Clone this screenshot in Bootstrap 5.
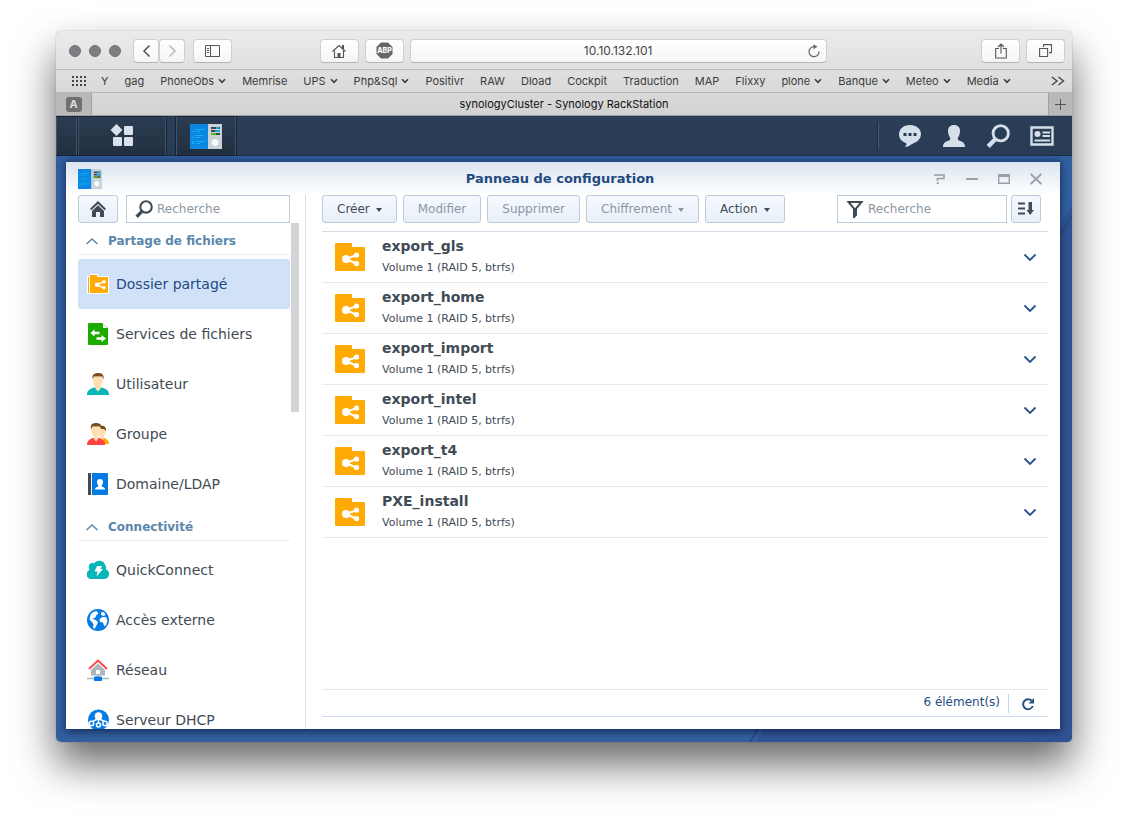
<!DOCTYPE html>
<html lang="fr">
<head>
<meta charset="utf-8">
<meta name="viewport" content="width=device-width, initial-scale=1">
<title>synologyCluster - Synology RackStation</title>
<link href="https://cdn.jsdelivr.net/npm/bootstrap@5.3.0/dist/css/bootstrap.min.css" rel="stylesheet">
<script src="https://cdn.jsdelivr.net/npm/bootstrap@5.3.0/dist/js/bootstrap.bundle.min.js"></script>
<style>
  :root { --dsm-text: #414b55; --dsm-blue: #1f4a82; --dsm-line: #e6e9f0; }
  body { height: 100vh; padding: 31px 56px 80px; background: #fff; color: var(--dsm-text); font-family: "DejaVu Sans", Verdana, sans-serif; font-size: 12px; line-height: 16px; }
  svg { display: block; flex: none; }
  a { color: inherit; text-decoration: none; }
  .fill-rest { flex: 1 1 0; min-height: 0; }

  /* Browser window */
  .browser { border-radius: 5px; overflow: hidden; }
  .browser-shadow { border-radius: 5px; box-shadow: 0 22px 42px rgba(0,0,0,.6), 0 0 1px rgba(0,0,0,.6); }
  .browser-chrome { font-family: Inter, "Liberation Sans", sans-serif; font-size: 11px; color: #3c3c3c; background: linear-gradient(#ebebeb, #d2d2d2); }
  .chrome-bar { height: 39px; padding: 1px 7px 0 13px; border-bottom: 1px solid #bdbdbd; }
  .chrome-left { flex: 10 1 0; }
  .chrome-right { flex: 7 1 0; }
  .dot { width: 12px; height: 12px; border-radius: 50%; background: #7e7d82; border: 1px solid #6f6e73; }
  .chrome-btn { width: 39px; height: 24px; padding: 0; border: 1px solid #cfcfcf; border-bottom-color: #b4b4b4; border-radius: 4px; background: linear-gradient(#fff, #f5f5f5); color: #555; display: flex; align-items: center; justify-content: center; }
  .chrome-btn.half { width: 26px; }
  .quick-btns { gap: 6px; margin-right: 6px; }
  .address { width: 417px; height: 24px; border: 1px solid #cfcfcf; border-bottom-color: #b4b4b4; border-radius: 4px; background: linear-gradient(#fff, #f5f5f5); }
  .address input { min-width: 0; border: 0; background: none; text-align: center; font-size: 12px; color: #444; padding: 0 0 0 24px; outline: 0; }
  .address button { border: 0; background: none; padding: 0; width: 24px; color: #666; }
  .bookmarks { height: 23px; padding: 0 7px 0 16px; border-bottom: 1px solid #b5b5b5; }
  .bookmarks ul { padding-left: 15px; gap: 16px; }
  .tabs-row { height: 23px; border-bottom: 1px solid #9f9f9f; color: #111; }
  .tab-title { padding-right: 12px; }
  .pinned { width: 36px; background: #b9b9b9; border-right: 1px solid #a0a0a0; }
  .pinned span { width: 16px; height: 15px; border-radius: 3px; background: #707070; color: #ddd; font-weight: 700; line-height: 15px; text-align: center; }
  .new-tab { width: 24px; border: 0; border-left: 1px solid #a0a0a0; background: #b9b9b9; color: #555; padding: 0; }

  /* DSM taskbar */
  .taskbar { height: 40px; background: linear-gradient(#2a3e57, #293c55); border-top: 1px solid #1d3a52; border-bottom: 1px solid #1f2f44; color: #d5dfea; }
  .task-slot { height: 38px; border: 1px solid #43546a; border-width: 0 1px; background: linear-gradient(#2b3d52, #222f3f); color: #d8e1ec; padding: 0; box-shadow: 0 0 0 1px #162338; }
  .slot-edge { width: 21px; }
  .slot-menu { width: 88px; margin-left: 1px; }
  .slot-app { width: 60px; margin-left: 10px; }
  .tray { border-left: 1px solid #4a5d78; box-shadow: -1px 0 #1a2a40; margin: 6px 0; padding: 0 18px 0 19px; gap: 20px; }
  .tray button { border: 0; background: none; padding: 0; color: inherit; }

  .desktop { padding: 4px 12px 13px 10px; background: #315f9f url("data:image/svg+xml,%3Csvg xmlns='http://www.w3.org/2000/svg' viewBox='0 0 1016 586' preserveAspectRatio='none'%3E%3Cpath d='M700 586L1016 50V586z' fill='%23305395'/%3E%3Cpath d='M694 586L1016 60' stroke='%23284c83' stroke-width='2'/%3E%3C/svg%3E") 0 0 / 100% 100% no-repeat; }
  .dsm-window { background: #fff; border-top: 2px solid #264d83; box-shadow: 0 2px 8px rgba(0,10,40,.65); }
  .dsm-title { height: 33px; background: linear-gradient(#dbe4ee, #fff); }
  .dsm-title h1 { font-size: 13px; line-height: 33px; font-weight: 700; color: var(--dsm-blue); margin: 0; }
  .win-btns { gap: 20px; padding-right: 18px; color: #9a9fa8; }
  .win-btns button { border: 0; background: none; padding: 0; color: inherit; }
  .side-block { flex: 1 1 0; }

  .dsm-btn { --bs-btn-color: #414b55; --bs-btn-border-color: #bccbd9; --bs-btn-border-radius: 3px; --bs-btn-font-size: 12px; --bs-btn-line-height: 16px; --bs-btn-padding-x: 14px; --bs-btn-padding-y: 5px; --bs-btn-disabled-color: #8b97a3; --bs-btn-disabled-border-color: #bccbd9; --bs-btn-disabled-opacity: 1; background: linear-gradient(#f5f9ff, #e9f0f8) !important; height: 28px; }
  .dsm-btn.dropdown-toggle::after { border-width: 4px 3px 0; vertical-align: 1px; margin-left: 6px; }
  .icon-btn { padding: 0; display: flex; align-items: center; justify-content: center; flex: none; width: 30px; }
  .icon-btn.wide { width: 40px; }
  .search-box { height: 28px; border: 1px solid #bccbd9; background: #fff; padding-left: 8px; gap: 4px; }
  .search-box input { border: 0; outline: 0; padding: 0; font-size: 12px; min-width: 0; color: var(--dsm-text); }
  .search-box input::placeholder { color: #8b97a3; opacity: 1; }
  .filter-box { width: 170px; }

  .sidebar { width: 240px; padding-left: 12px; border-right: 1px solid #dcdcdc; }
  .side-tools { padding-right: 15px; gap: 8px; }
  .side-list { width: 212px; overflow: hidden; }
  .thumb { width: 8px; height: 189px; background: #d3d4d6; margin-left: 1px; }
  .group-head { height: 32px; margin: 0 0 4px; padding: 4px 0 0 7px; gap: 9px; font-size: 12px; line-height: 16px; font-weight: 700; color: #5a86ab; border-bottom: 1px solid #ebedef; }
  .side-item { height: 50px; padding-left: 9px; gap: 7px; font-size: 14px; border-radius: 3px; color: var(--dsm-text); }
  .side-item.active { background: #d1e2f8; color: var(--dsm-blue); }

  .main-pane { padding: 0 12px 12px 16px; }
  .tool-row { gap: 6px; border-bottom: 1px solid #d0dbe5; height: 37px; }
  .tool-end { gap: 4px; padding-right: 7px; }
  .share { height: 51px; border-bottom: 1px solid var(--dsm-line); padding: 0 11px 0 12px; }
  .share-name { font-size: 14px; line-height: 20px; font-weight: 700; margin: 0; }
  .share-info { font-size: 11px; line-height: 16px; padding-top: 4px; margin-bottom: 2px; }
  .share button { border: 0; background: none; padding: 0; color: #29528c; }
  .status { height: 28px; border-top: 1px solid #e6e9ec; border-bottom: 1px solid #cddcec; color: var(--dsm-blue); padding: 4px 13px 3px 0; }
  .status button { border: 0; border-left: 1px solid #c3d6e8; background: none; padding: 0 0 0 12px; color: #29527f; }
</style>
</head>
<body class="d-flex flex-column">

<svg width="0" height="0" class="position-absolute" aria-hidden="true">
  <symbol id="chev" viewBox="0 0 8 6"><path d="M1 1.3 4 4.3 7 1.3" fill="none" stroke="currentColor" stroke-width="1.6"/></symbol>
  <symbol id="chev-big" viewBox="0 0 14 9"><path d="M1.5 1.5 7 7 12.500 1.5" fill="none" stroke="currentColor" stroke-width="1.8"/></symbol>
  <symbol id="panel" viewBox="0 0 32 25" preserveAspectRatio="none">
    <path fill="#0b86e3" d="M0 0h18v25H0z"/><path fill="#c9d1d9" d="M18 0h14v25H18z"/>
    <path d="m1.500 6.500 1.500 1.500 2-3M1.500 12.500 3 14l2-3M6 5.500h9M6 7.500h4M6 11.500h7M6 13.500h4M6 17.500h9M6 19.500h4M2 17.500h2v2H2z" fill="none" stroke="#0fb2f5"/>
    <path stroke="#3b4650" stroke-width="2" d="M21 4h9M21 7h9M21 10h9"/><path stroke="#16b0f0" stroke-width="2" d="M26 4h3M25 7h5"/><path stroke="#56bb00" stroke-width="2" d="M21 10h5"/>
    <circle cx="25" cy="18.500" r="4" fill="#f3fbfd" stroke="#aeb6be" stroke-width=".5"/>
  </symbol>
  <symbol id="folder" viewBox="0 0 30 28">
    <path fill="#ffaa05" d="M1 0h15q1 0 1 1v3h12q1 0 1 1v22q0 1-1 1H1q-1 0-1-1V1q0-1 1-1z"/>
    <path d="M22 12 11 16l11 5" fill="none" stroke="#fff" stroke-width="2"/><circle cx="11" cy="16" r="4" fill="#fff"/><circle cx="21.500" cy="12" r="2.600" fill="#fff"/><circle cx="21.500" cy="20.500" r="2.600" fill="#fff"/>
  </symbol>
  <symbol id="magnifier" viewBox="0 0 22 22"><circle cx="13.500" cy="8.500" r="7" fill="none" stroke="currentColor" stroke-width="2.600"/><path d="m8.500 14-6.500 6.500" stroke="currentColor" stroke-width="4"/></symbol>
  <symbol id="house" viewBox="0 0 16 16"><path d="M.7 8.500 8 1.500l7.300 7" fill="none" stroke="currentColor" stroke-width="2"/><path fill="currentColor" d="M2 10 8 4.300 14 10v6h-4v-5H6v5H2z"/></symbol>
</svg>

<div class="browser-shadow fill-rest d-flex">
<div class="browser w-100 d-flex flex-column">

  <header class="browser-chrome flex-shrink-0">
    <div class="chrome-bar d-flex align-items-center">
      <div class="chrome-left d-flex align-items-center">
        <div class="d-flex gap-2"><span class="dot"></span><span class="dot"></span><span class="dot"></span></div>
        <div class="d-flex ps-2 ms-1">
          <button class="chrome-btn half" aria-label="Précédent"><svg width="9" height="14" viewBox="0 0 9 14"><path d="M7.500 1.500 2 7l5.500 5.500" fill="none" stroke="#555" stroke-width="1.500"/></svg></button>
          <button class="chrome-btn half" aria-label="Suivant"><svg width="9" height="14" viewBox="0 0 9 14"><path d="M1.500 1.500 7 7l-5.500 5.500" fill="none" stroke="#bbb" stroke-width="1.500"/></svg></button>
        </div>
        <button class="chrome-btn ms-2" aria-label="Barre latérale"><svg width="15" height="12" viewBox="0 0 15 12" fill="none" stroke="currentColor"><path d="M.5.500h14v11H.5zM5.500.500v11M2 3.500h2M2 5.500h2M2 7.500h2"/></svg></button>
        <div class="quick-btns d-flex ms-auto">
          <button class="chrome-btn" aria-label="Accueil"><svg width="16" height="16" viewBox="0 0 16 16"><path d="M1.500 8.500 8 2.500l6.500 6M3.500 7.500v7h9v-7M11.500 5V2.500h1V6" fill="none" stroke="currentColor" stroke-width="1.100"/><path fill="currentColor" d="M6.500 10h3v5h-3z"/></svg></button>
          <button class="chrome-btn" aria-label="Adblock Plus"><svg width="17" height="17" viewBox="0 0 17 17"><path fill="#666" d="M5 .5h7L16.500 5v7L12 16.500H5L.5 12V5z"/><text x="8.500" y="11" text-anchor="middle" font-size="7" font-weight="800" fill="#fff">ABP</text></svg></button>
        </div>
      </div>
      <form class="address d-flex align-items-center">
        <input class="flex-grow-1" type="text" value="10.10.132.101" aria-label="Adresse">
        <button type="button" aria-label="Recharger"><svg width="14" height="14" viewBox="0 0 14 14" class="mx-auto"><path d="M7 2.700A5 5 0 1 0 12 7.500" fill="none" stroke="currentColor" stroke-width="1.200"/><path d="M6.500.200v5L10.500 2.700z" fill="currentColor"/></svg></button>
      </form>
      <div class="chrome-right quick-btns d-flex justify-content-end me-0">
        <button class="chrome-btn" aria-label="Partager"><svg width="12" height="16" viewBox="0 0 12 16" fill="none" stroke="currentColor" stroke-width="1.100"><path d="M4 5.500H.7v9.500h10.600V5.500H8M6 10.500V1.500M3 4l3-3 3 3"/></svg></button>
        <button class="chrome-btn" aria-label="Onglets"><svg width="13" height="13" viewBox="0 0 13 13" fill="none" stroke="currentColor" stroke-width="1.100"><path d="M.6 4.500h8v8h-8zM4.500 3V.6h8v8H10"/></svg></button>
      </div>
    </div>

    <nav class="bookmarks d-flex align-items-center" aria-label="Favoris">
      <svg width="14" height="11" viewBox="0 0 14 11"><path d="M0 1h14M0 5h14M0 9h14" stroke="#444" stroke-width="2" stroke-dasharray="2 2"/></svg>
      <ul class="list-unstyled d-flex mb-0 flex-grow-1">
        <li><a href="#">Y</a></li><li><a href="#">gag</a></li>
        <li><a href="#" class="d-flex align-items-center gap-1">PhoneObs<svg width="8" height="6"><use href="#chev"/></svg></a></li>
        <li><a href="#">Memrise</a></li>
        <li><a href="#" class="d-flex align-items-center gap-1">UPS<svg width="8" height="6"><use href="#chev"/></svg></a></li>
        <li><a href="#" class="d-flex align-items-center gap-1">Php&amp;Sql<svg width="8" height="6"><use href="#chev"/></svg></a></li>
        <li><a href="#">Positivr</a></li><li><a href="#">RAW</a></li><li><a href="#">Dload</a></li><li><a href="#">Cockpit</a></li><li><a href="#">Traduction</a></li><li><a href="#">MAP</a></li><li><a href="#">Flixxy</a></li>
        <li><a href="#" class="d-flex align-items-center gap-1">plone<svg width="8" height="6"><use href="#chev"/></svg></a></li>
        <li><a href="#" class="d-flex align-items-center gap-1">Banque<svg width="8" height="6"><use href="#chev"/></svg></a></li>
        <li><a href="#" class="d-flex align-items-center gap-1">Meteo<svg width="8" height="6"><use href="#chev"/></svg></a></li>
        <li><a href="#" class="d-flex align-items-center gap-1">Media<svg width="8" height="6"><use href="#chev"/></svg></a></li>
      </ul>
      <svg width="14" height="10" viewBox="0 0 14 10"><path d="m1 1 5 4-5 4M7.500 1l5 4-5 4" fill="none" stroke="#444" stroke-width="1.400"/></svg>
    </nav>

    <div class="tabs-row d-flex">
      <a href="#" class="pinned d-flex align-items-center justify-content-center" aria-label="Onglet épinglé"><span>A</span></a>
      <a href="#" class="tab-title flex-grow-1 d-flex align-items-center justify-content-center">synologyCluster - Synology RackStation</a>
      <button class="new-tab" aria-label="Nouvel onglet"><svg width="11" height="11" viewBox="0 0 11 11" class="mx-auto"><path d="M5.500 0v11M0 5.500h11" stroke="currentColor"/></svg></button>
    </div>
  </header>

  <nav class="taskbar d-flex flex-shrink-0" aria-label="Barre des tâches">
    <div class="task-slot slot-edge"></div>
    <button class="task-slot slot-menu d-flex align-items-center justify-content-center" aria-label="Menu principal"><svg width="24" height="24" viewBox="0 0 24 24" fill="currentColor"><path d="M6.500 0 12.500 6 6.500 12 .5 6z"/><rect x="14" y="2" width="9" height="9" rx="1"/><rect x="3" y="13" width="9" height="9" rx="1"/><rect x="14" y="13" width="9" height="9" rx="1"/></svg></button>
    <button class="task-slot slot-app d-flex align-items-center justify-content-center" aria-label="Panneau de configuration"><svg width="32" height="25"><use href="#panel"/></svg></button>
    <div class="tray ms-auto d-flex align-items-center">
      <button aria-label="Discussion"><svg width="24" height="24" viewBox="0 0 24 24"><path fill="currentColor" d="M12 1c6.500 0 11 4 11 9 0 6-6 9-9 10-2 1-4 3-7 3 1-1 2-3 1-4C4 17.500 1 15 1 10.500 1 5 5.500 1 12 1z"/><path d="M5.500 9h3v3h-3zM10.500 9h3v3h-3zM15.500 9h3v3h-3z" fill="#293c55"/></svg></button>
      <button aria-label="Compte"><svg width="24" height="24" viewBox="0 0 24 24"><path fill="currentColor" d="M12 1c4 0 6 2.500 6 6 0 3-1 5-2 6.500-.5 1.500 0 2.500 1 3 3 1 6 2 6 6.500H1c0-4.500 3-5.500 6-6.500 1-.5 1.500-1.500 1-3C7 12 6 10 6 7c0-3.500 2-6 6-6z"/></svg></button>
      <button aria-label="Rechercher"><svg width="24" height="24"><use href="#magnifier"/></svg></button>
      <button aria-label="Widgets"><svg width="24" height="24" viewBox="0 0 24 24"><path d="M1.500 3.500h21v17h-21z" fill="none" stroke="currentColor" stroke-width="2.400"/><circle cx="7.500" cy="10" r="3" fill="currentColor"/><path d="M12.500 8.500H20M12.500 12H20M4.500 16.500H20" stroke="currentColor" stroke-width="2"/></svg></button>
    </div>
  </nav>

  <main class="desktop fill-rest d-flex">
    <section class="dsm-window w-100 d-flex flex-column">
      <div class="dsm-title d-flex flex-shrink-0">
        <div class="side-block d-flex align-items-center ps-2 ms-1"><svg width="24" height="20"><use href="#panel"/></svg></div>
        <h1>Panneau de configuration</h1>
        <div class="side-block win-btns d-flex justify-content-end align-items-center">
          <button aria-label="Aide"><svg width="12" height="12" viewBox="0 0 12 12"><path d="M0 2h10v3.500H3.500V8" fill="none" stroke="currentColor" stroke-width="1.600"/><path fill="currentColor" d="M2.700 9.200h2V11h-2z"/></svg></button>
          <button aria-label="Réduire"><svg width="12" height="12" viewBox="0 0 12 12"><path d="M0 6h12" stroke="currentColor" stroke-width="2"/></svg></button>
          <button aria-label="Agrandir"><svg width="12" height="12" viewBox="0 0 12 12"><path d="M.7 2h10.600v8.300H.7z" fill="none" stroke="currentColor" stroke-width="1.400"/><path d="M0 2.500h12" stroke="currentColor" stroke-width="3"/></svg></button>
          <button aria-label="Fermer"><svg width="12" height="12" viewBox="0 0 12 12"><path d="m.7 1 10.600 10M11.300 1 .7 11" stroke="currentColor" stroke-width="1.800"/></svg></button>
        </div>
      </div>

      <div class="d-flex fill-rest">
        <aside class="sidebar d-flex flex-column flex-shrink-0">
          <div class="side-tools d-flex flex-shrink-0">
            <button class="btn dsm-btn icon-btn wide" aria-label="Accueil"><svg width="16" height="16"><use href="#house"/></svg></button>
            <label class="search-box d-flex align-items-center flex-grow-1"><svg width="18" height="18"><use href="#magnifier"/></svg><input type="search" class="w-100" placeholder="Recherche" aria-label="Rechercher un réglage"></label>
          </div>
          <div class="d-flex fill-rest">
            <nav class="side-list">
              <h2 class="group-head d-flex align-items-center"><svg width="14" height="8" viewBox="0 0 14 8"><path d="m1.500 7 5.500-5 5.500 5" fill="none" stroke="#6087a8" stroke-width="1.500"/></svg>Partage de fichiers</h2>
              <a href="#" class="side-item active d-flex align-items-center"><svg width="22" height="22" viewBox="0 0 22 22"><path d="M0 3h3V1h8v2h11v18H0z" fill="#fff"/><path d="M1 4h1v16H1zM3 2h7v2h11v16H3z" fill="#ffaa05"/><path d="m17 8.500-7 3.200 7 3.300" fill="none" stroke="#fff" stroke-width="1.400"/><circle cx="10" cy="11.700" r="2.300" fill="#fff"/><circle cx="17" cy="8.800" r="1.700" fill="#fff"/><circle cx="17" cy="14.700" r="1.700" fill="#fff"/></svg>Dossier partagé</a>
              <a href="#" class="side-item d-flex align-items-center"><svg width="22" height="22" viewBox="0 0 22 22"><path d="M2 0h13l6 5v16q0 1-1 1H2q-1 0-1-1V1q0-1 1-1z" fill="#1eab00"/><path d="M16 1v4h4.500" fill="#fff"/><path d="M7.500 6.500v2.300h5v2.400h-5v2.300L3.500 10zM14.500 12v2.300h-5v2.400h5V19l4.500-3.500z" fill="#fff"/></svg>Services de fichiers</a>
              <a href="#" class="side-item d-flex align-items-center"><svg width="22" height="22" viewBox="0 0 22 22"><path d="M0 22c0-5 3-6 7.500-7.500h7C19 16 22 17 22 22z" fill="#06b6b9"/><path d="M7 4h8.500c1 0 1.500 3 0 4-.5 3-1 4-2 5.500V16L11 18.500 8.500 16v-2.500C7 12 6.500 11 6.300 8 5 7 6 4 7 4z" fill="#ffdfb0"/><path d="M5.500 6C5 2 7 0 11.500 0S17 3 16.500 6l-1.500-2.500H7z" fill="#7a4a22"/></svg>Utilisateur</a>
              <a href="#" class="side-item d-flex align-items-center"><svg width="22" height="22" viewBox="0 0 22 22"><path d="M15 14c4 1.500 7 2.500 7 7h-7z" fill="#ffaa05"/><path d="M12 5h6c1 1 1 3 .5 5s-1 3-2 3.500V17l-4-3z" fill="#ffdfb0"/><path d="M13 3c4-1 6.500 1 6 5l-2-2h-4z" fill="#7a4a22"/><path d="M0 22c0-4.500 2-5.500 6-7h6c4 1.500 6 2.500 6 7z" fill="#ff4444"/><path d="M5 4h8c1 0 1.500 3 0 4-.3 3-1 4-2 5.500V16l-2 2.500L7 16v-2.500C5.500 12 5 11 4.500 8 3.500 7 4 4 5 4z" fill="#ffdfb0"/><path d="M4 6C3 2 5 0 9.300 0 14 0 15 3 14.500 6L13 3.500H5.500z" fill="#7a4a22"/></svg>Groupe</a>
              <a href="#" class="side-item d-flex align-items-center"><svg width="22" height="22" viewBox="0 0 22 22"><path fill="#414b55" d="M1 0h3v22H1z"/><path fill="#037be5" d="M5 0h15q1 0 1 1v20q0 1-1 1H5z"/><path fill="#fff" d="M13 6c2 0 3 1 3 3 0 1.500-.6 2.500-1.300 3.300v1.200c1.800.5 3.300 1 3.300 3H8c0-2 1.500-2.500 3.300-3v-1.200C10.600 11.500 10 10.500 10 9c0-2 1-3 3-3z"/></svg>Domaine/LDAP</a>
              <h2 class="group-head d-flex align-items-center"><svg width="14" height="8" viewBox="0 0 14 8"><path d="m1.500 7 5.500-5 5.500 5" fill="none" stroke="#6087a8" stroke-width="1.500"/></svg>Connectivité</h2>
              <a href="#" class="side-item d-flex align-items-center"><svg width="22" height="22" viewBox="0 0 22 22"><path fill="#06b6b9" d="M5 20c-7 0-6.500-7.500-2.500-9C0 6 4 3 7 4.500 9 1 17 .5 18 6c2 2 .5 3 1 4.500 5 1.500 3.500 9.500-2 9.500z"/><path fill="#fff" d="M10 7h5l-1.500 3H16l-6.500 7.500 1-5H7.500z"/></svg>QuickConnect</a>
              <a href="#" class="side-item d-flex align-items-center"><svg width="22" height="22" viewBox="0 0 22 22"><circle cx="11" cy="11" r="11" fill="#037be5"/><path fill="#fff" d="M3.500 5.500C5 3.500 7 2.300 9.500 2l2 2.500-2 1.500-1 2.500L5.500 9.500l3 1.500 2.500 2-1.500 3.500-2 3.500L6 18.500l.5-3.500L2.500 10.500zM14 3.500l3-.5 1.500 3-2 1-2.500-1zM12.500 10l3-2 3.500 0 1.500 3.500-1.500 5L17 17l-1-3.500-3-.5z"/></svg>Accès externe</a>
              <a href="#" class="side-item d-flex align-items-center"><svg width="22" height="22" viewBox="0 0 22 22"><path fill="#adb6c0" d="m11 4.500 7 6.500v5.500H4V11z"/><path d="m2 10 9-8.500L20 10" fill="none" stroke="#ff4444" stroke-width="1.800"/><path fill="#fff" d="M9 11h4v4H9z"/><path d="M11 16v3M0 19.500h22" stroke="#adb6c0" stroke-width="1.600"/><rect x="7" y="17.500" width="8" height="4.500" rx="1" fill="#037be5"/></svg>Réseau</a>
              <a href="#" class="side-item d-flex align-items-center"><svg width="22" height="22" viewBox="0 0 22 22"><circle cx="11.500" cy="11" r="10.500" fill="#037be5"/><circle cx="11.500" cy="7" r="3.800" fill="#fff"/><g fill="none" stroke="#fff" stroke-width="1.500"><path d="M10.500 10 5.500 12.500M11.500 10v4M12.500 10l5 2.500"/><circle cx="4.500" cy="14.500" r="2.200"/><circle cx="11.500" cy="16" r="2"/><circle cx="18" cy="14.500" r="2.200"/></g></svg>Serveur DHCP</a>
            </nav>
            <div class="thumb"></div>
          </div>
        </aside>

        <div class="main-pane flex-grow-1 d-flex flex-column">
          <div class="tool-row d-flex align-items-start flex-shrink-0">
            <button class="btn dsm-btn dropdown-toggle">Créer</button>
            <button class="btn dsm-btn" disabled>Modifier</button>
            <button class="btn dsm-btn" disabled>Supprimer</button>
            <button class="btn dsm-btn dropdown-toggle" disabled>Chiffrement</button>
            <button class="btn dsm-btn dropdown-toggle">Action</button>
            <div class="tool-end d-flex ms-auto">
              <label class="search-box filter-box d-flex align-items-center"><svg width="18" height="18" viewBox="0 0 18 18"><path d="M2.500 2h13L10 8.500v6.500L8 17V8.500z" fill="none" stroke="#414b55" stroke-width="2"/></svg><input type="search" class="w-100" placeholder="Recherche" aria-label="Filtrer les dossiers"></label>
              <button class="btn dsm-btn icon-btn" aria-label="Trier"><svg width="16" height="14" viewBox="0 0 16 14"><path d="M0 1.500h7M0 6.500h7M0 11.500h7" stroke="#414b55" stroke-width="2"/><path fill="#414b55" d="M10.500 0h3.500v8h2l-3.800 5L8.500 8h2z"/></svg></button>
            </div>
          </div>

          <ul class="list-unstyled mb-0 flex-grow-1">
            <li class="share d-flex align-items-center"><svg width="32" height="28"><use href="#folder"/></svg><div class="flex-grow-1 ps-3"><h3 class="share-name">export_gls</h3><div class="share-info">Volume 1 (RAID 5, btrfs)</div></div><button aria-label="Détails"><svg width="14" height="9"><use href="#chev-big"/></svg></button></li>
            <li class="share d-flex align-items-center"><svg width="32" height="28"><use href="#folder"/></svg><div class="flex-grow-1 ps-3"><h3 class="share-name">export_home</h3><div class="share-info">Volume 1 (RAID 5, btrfs)</div></div><button aria-label="Détails"><svg width="14" height="9"><use href="#chev-big"/></svg></button></li>
            <li class="share d-flex align-items-center"><svg width="32" height="28"><use href="#folder"/></svg><div class="flex-grow-1 ps-3"><h3 class="share-name">export_import</h3><div class="share-info">Volume 1 (RAID 5, btrfs)</div></div><button aria-label="Détails"><svg width="14" height="9"><use href="#chev-big"/></svg></button></li>
            <li class="share d-flex align-items-center"><svg width="32" height="28"><use href="#folder"/></svg><div class="flex-grow-1 ps-3"><h3 class="share-name">export_intel</h3><div class="share-info">Volume 1 (RAID 5, btrfs)</div></div><button aria-label="Détails"><svg width="14" height="9"><use href="#chev-big"/></svg></button></li>
            <li class="share d-flex align-items-center"><svg width="32" height="28"><use href="#folder"/></svg><div class="flex-grow-1 ps-3"><h3 class="share-name">export_t4</h3><div class="share-info">Volume 1 (RAID 5, btrfs)</div></div><button aria-label="Détails"><svg width="14" height="9"><use href="#chev-big"/></svg></button></li>
            <li class="share d-flex align-items-center"><svg width="32" height="28"><use href="#folder"/></svg><div class="flex-grow-1 ps-3"><h3 class="share-name">PXE_install</h3><div class="share-info">Volume 1 (RAID 5, btrfs)</div></div><button aria-label="Détails"><svg width="14" height="9"><use href="#chev-big"/></svg></button></li>
          </ul>

          <footer class="status d-flex justify-content-end flex-shrink-0 gap-2">
            <span>6 élément(s)</span>
            <button aria-label="Actualiser"><svg width="14" height="14" viewBox="0 0 14 14"><path d="M10.800 3.800A5 5 0 1 0 11.800 9" fill="none" stroke="currentColor" stroke-width="2"/><path d="M13 1v5.500H7.500z" fill="currentColor"/></svg></button>
          </footer>
        </div>
      </div>
    </section>
  </main>
</div>
</div>
</body>
</html>
